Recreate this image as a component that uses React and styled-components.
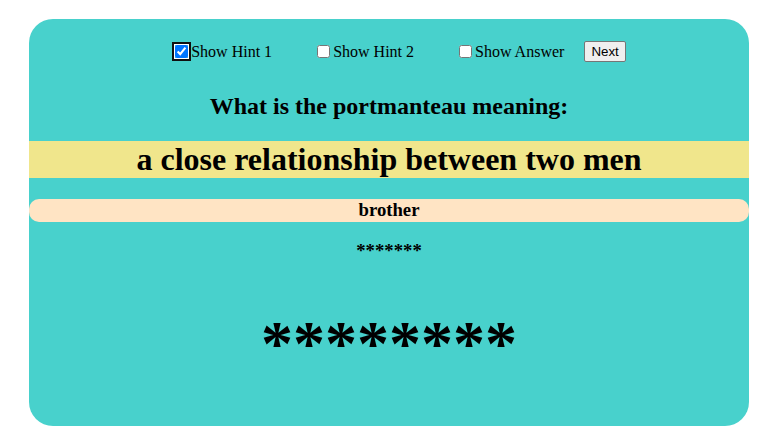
import React, { useState } from "react";
import styled, { createGlobalStyle } from "styled-components";

const Global = createGlobalStyle`
  html, body { margin: 0; padding: 0; background: #ffffff; }
  body { font-family: "Liberation Serif", "Times New Roman", serif; color: #000; }
`;

const Card = styled.div`
  width: 720px;
  margin: 19px auto 0;
  height: 407px;
  box-sizing: border-box;
  background: #48d1cc;
  border-radius: 24px;
  padding-top: 22px;
  display: flex;
  flex-direction: column;
  align-items: stretch;
  text-align: center;
`;

const Controls = styled.div`
  display: flex;
  justify-content: center;
  align-items: center;
  height: 21px;
  padding-left: 19px;
`;

const Option = styled.label`
  display: inline-flex;
  align-items: center;
  font-size: 16px;
  margin-right: ${(p) => p.$gap}px;
  white-space: nowrap;
`;

const Check = styled.input`
  margin: 3px 3px 3px 4px;
  width: 13px;
  height: 13px;
  outline: ${(p) => (p.$focused ? "2px solid #101010" : "none")};
  outline-offset: 1px;
  box-shadow: ${(p) => (p.$focused ? "0 0 0 1px #ffffff" : "none")};
  border-radius: 2px;
`;

const NextButton = styled.button`
  font-family: "Liberation Sans", Arial, sans-serif;
  font-size: 13.33px;
  height: 21px;
  padding: 1px 6px;
  background: #efefef;
  border: 1px solid #767676;
  border-radius: 2px;
  color: #000;
`;

const Question = styled.h2`
  margin: 31px 0 0;
  font-size: 24px;
  font-weight: bold;
`;

const Definition = styled.h1`
  margin: 21px 0 0;
  background: #f0e68c;
  font-size: 32px;
  font-weight: bold;
  line-height: 37px;
`;

const Hint = styled.h3`
  margin: 21px 0 0;
  background: #ffe4c4;
  border-radius: 10px;
  font-size: 18.72px;
  font-weight: bold;
  height: 23px;
  line-height: 21.5px;
`;

const SmallMask = styled.h3`
  margin: 18px 0 0;
  font-size: 18.72px;
  font-weight: bold;
  line-height: 21.5px;
`;

const BigMask = styled.div`
  margin-top: 45px;
  font-size: 64px;
  font-weight: bold;
  line-height: 73.6px;
`;

export default function App() {
  const [hint1, setHint1] = useState(true);
  const [hint2, setHint2] = useState(false);
  const [answer, setAnswer] = useState(false);
  return (
    <>
      <Global />
      <Card>
        <Controls>
          <Option $gap={41}>
            <Check type="checkbox" $focused checked={hint1} onChange={(e) => setHint1(e.target.checked)} />
            Show Hint 1
          </Option>
          <Option $gap={41}>
            <Check type="checkbox" checked={hint2} onChange={(e) => setHint2(e.target.checked)} />
            Show Hint 2
          </Option>
          <Option $gap={20}>
            <Check type="checkbox" checked={answer} onChange={(e) => setAnswer(e.target.checked)} />
            Show Answer
          </Option>
          <NextButton>Next</NextButton>
        </Controls>
        <Question>What is the portmanteau meaning:</Question>
        <Definition>a close relationship between two men</Definition>
        <Hint>brother</Hint>
        <SmallMask>*******</SmallMask>
        <BigMask>********</BigMask>
      </Card>
    </>
  );
}
